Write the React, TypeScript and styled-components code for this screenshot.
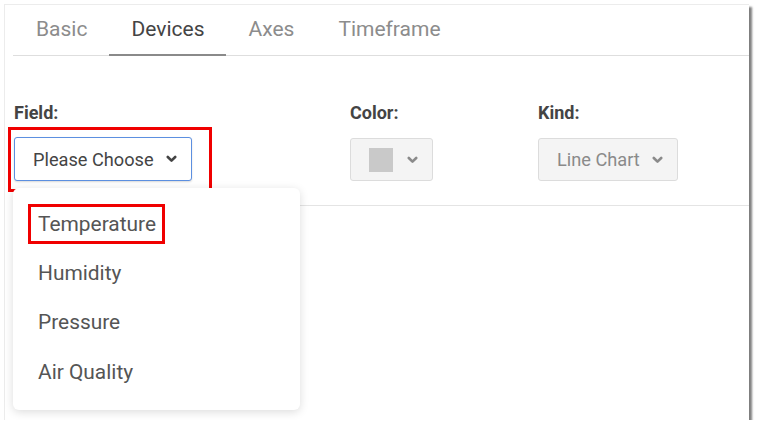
import React from "react";
import styled, { createGlobalStyle } from "styled-components";

const Global = createGlobalStyle`
  html, body { margin: 0; padding: 0; background: #ffffff; }
  body { font-family: Roboto, "Liberation Sans", Arial, sans-serif; }
  * { box-sizing: border-box; }
`;

const Frame = styled.div`
  position: relative;
  margin: 4px 0 0 4px;
  width: 745px;
  height: 416px;
  background: #fff;
  border-top: 1px solid #ececec;
  border-left: 1px solid #ececec;
  box-shadow: 3px 3px 2px rgba(0, 0, 0, 0.5);
  padding-left: 8px;
`;

const TabBar = styled.div`
  display: flex;
  height: 51px;
  padding-left: 1px;
  border-bottom: 1px solid #dedede;
`;

const Tab = styled.div<{ $active?: boolean }>`
  display: flex;
  align-items: center;
  padding: 0 22px 2px;
  font-size: 21px;
  color: ${(p) => (p.$active ? "#444" : "#8c8c8c")};
  border-bottom: 2px solid ${(p) => (p.$active ? "#8a8a8a" : "transparent")};
  margin-bottom: -1px;
`;

const FormRow = styled.div`
  display: flex;
  padding: 47px 0 24px 1px;
  border-bottom: 1px solid #e4e4e4;
`;

const Column = styled.div<{ $width: number }>`
  width: ${(p) => p.$width}px;
  display: flex;
  flex-direction: column;
  align-items: flex-start;
`;

const Label = styled.div`
  font-size: 18px;
  line-height: 20px;
  font-weight: 700;
  color: #444;
  margin-bottom: 14px;
`;

const Highlight = styled.div<{ $t: number; $r: number; $b: number; $l: number }>`
  position: relative;
  &::after {
    content: "";
    position: absolute;
    top: ${(p) => -p.$t}px;
    right: ${(p) => -p.$r}px;
    bottom: ${(p) => -p.$b}px;
    left: ${(p) => -p.$l}px;
    border: 3px solid #f00000;
    pointer-events: none;
  }
`;

const Select = styled.div<{ $open?: boolean; $disabled?: boolean; $width: number }>`
  width: ${(p) => p.$width}px;
  height: ${(p) => (p.$open ? 44 : 43)}px;
  margin-top: ${(p) => (p.$open ? 0 : 1)}px;
  display: flex;
  align-items: center;
  justify-content: space-between;
  padding: 0 14px 0 18px;
  border: 1px solid ${(p) => (p.$open ? "#5c8fe0" : "#dcdcdc")};
  border-radius: 3px;
  background: ${(p) => (p.$disabled ? "#f4f4f4" : "#fff")};
  box-shadow: ${(p) => (p.$open ? "0 1px 2px rgba(0,0,0,0.15)" : "none")};
  font-size: 18.2px;
  color: ${(p) => (p.$disabled ? "#8a8a8a" : "#444")};
  white-space: nowrap;
`;

const Swatch = styled.div`
  width: 24px;
  height: 24px;
  background: #c9c9c9;
`;

const Chevron = styled.svg<{ $light?: boolean }>`
  width: 11px;
  height: 8px;
  flex: none;
  stroke: ${(p) => (p.$light ? "#8a8a8a" : "#444")};
`;

const Menu = styled.div`
  position: absolute;
  left: 8px;
  top: 183px;
  width: 287px;
  height: 222px;
  background: #fff;
  border-radius: 6px;
  box-shadow: 0 2px 10px rgba(0, 0, 0, 0.14);
  padding-top: 11px;
  display: flex;
  flex-direction: column;
  z-index: 2;
`;

const MenuItem = styled.div`
  height: 49.4px;
  display: flex;
  align-items: center;
  padding-left: 25px;
  font-size: 20.9px;
  color: #555;
`;

const ChevronIcon = ({ light }: { light?: boolean }) => (
  <Chevron $light={light} viewBox="0 0 11 8" fill="none" strokeWidth={2.6} strokeLinecap="round" strokeLinejoin="round">
    <polyline points="1.8,2 5.5,5.6 9.2,2" />
  </Chevron>
);

export default function App() {
  return (
    <>
      <Global />
      <Frame>
        <TabBar>
          <Tab>Basic</Tab>
          <Tab $active>Devices</Tab>
          <Tab>Axes</Tab>
          <Tab>Timeframe</Tab>
        </TabBar>
        <FormRow>
          <Column $width={336}>
            <Label>Field:</Label>
            <Highlight $t={10} $r={20} $b={11} $l={6}>
              <Select $open $width={178}>
                Please Choose
                <ChevronIcon />
              </Select>
            </Highlight>
          </Column>
          <Column $width={188}>
            <Label>Color:</Label>
            <Select $disabled $width={83}>
              <Swatch />
              <ChevronIcon light />
            </Select>
          </Column>
          <Column $width={200}>
            <Label>Kind:</Label>
            <Select $disabled $width={140}>
              Line Chart
              <ChevronIcon light />
            </Select>
          </Column>
        </FormRow>
        <Menu>
          <MenuItem>
            <Highlight $t={8} $r={9} $b={8} $l={10}>Temperature</Highlight>
          </MenuItem>
          <MenuItem>Humidity</MenuItem>
          <MenuItem>Pressure</MenuItem>
          <MenuItem>Air Quality</MenuItem>
        </Menu>
      </Frame>
    </>
  );
}
